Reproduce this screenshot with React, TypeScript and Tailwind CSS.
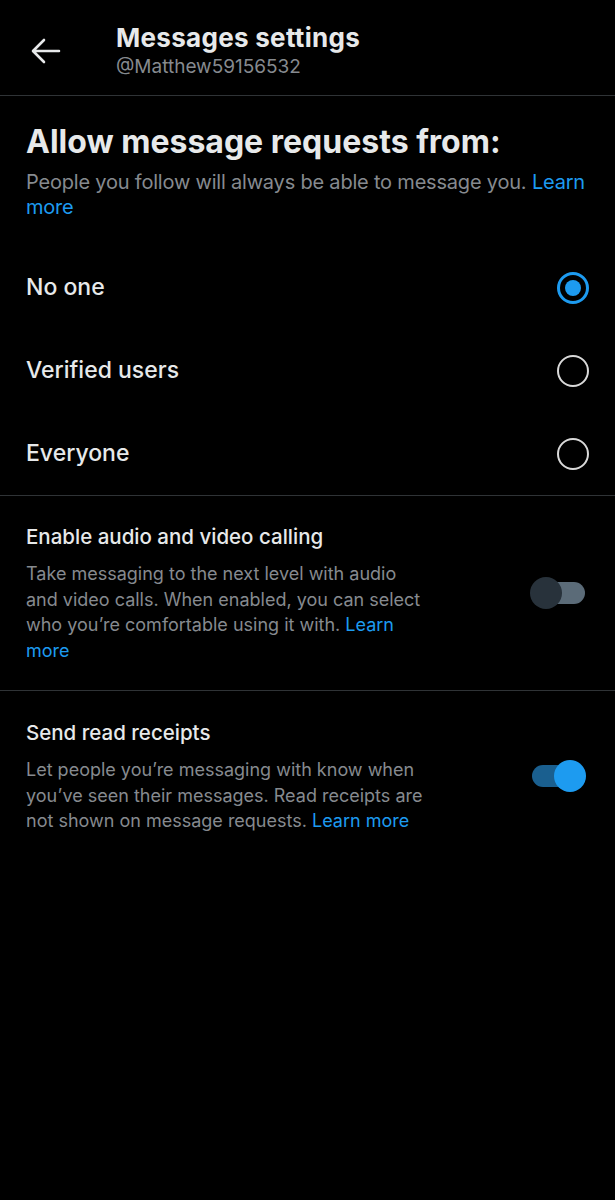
import { useState } from 'react'

const font = { fontFamily: 'Inter, "Noto Sans", sans-serif' }

function LearnMore({ text = 'Learn more' }: { text?: string }) {
  return <span className="text-[#1d9bf0]">{text}</span>
}

function Radio({ checked }: { checked: boolean }) {
  return checked ? (
    <span className="flex h-[32px] w-[32px] shrink-0 items-center justify-center rounded-full border-[3px] border-[#1d9bf0]">
      <span className="block h-[16px] w-[16px] rounded-full bg-[#1d9bf0]" />
    </span>
  ) : (
    <span className="block h-[32px] w-[32px] shrink-0 rounded-full border-2 border-[#d9d9d9]" />
  )
}

function Toggle({ on }: { on: boolean }) {
  return (
    <span className="relative block h-[32px] w-[56px] shrink-0">
      <span
        className={`absolute left-[2px] right-[1px] top-[5px] h-[22px] rounded-full ${
          on ? 'bg-[#1a5f8f]' : 'bg-[#5b6b78]'
        }`}
      />
      <span
        className={`absolute top-0 h-[32px] w-[32px] rounded-full ${
          on ? 'right-0 bg-[#1d9bf0]' : 'left-0 bg-[#28323b]'
        }`}
      />
    </span>
  )
}

export default function App() {
  const [choice, setChoice] = useState('No one')
  const options = ['No one', 'Verified users', 'Everyone']

  return (
    <div className="min-h-[1200px] w-[615px] bg-black text-[#e7e9ea]" style={font}>
      <header className="flex h-[96px] items-start border-b border-[#2f3336]">
        <div className="mt-[38px] flex w-[116px] items-center pl-[31px]">
          <svg width="30" height="26" viewBox="0 0 30 26" fill="none" stroke="#e7e9ea" strokeWidth="2.6" strokeLinecap="round" strokeLinejoin="round">
            <path d="M28 13H3M13 2L2 13l11 11" />
          </svg>
        </div>
        <div className="flex flex-col pt-[22px]">
          <h1 className="text-[26px] font-bold leading-[32px] tracking-[0.3px]">Messages settings</h1>
          <span className="text-[19px] leading-[26px] text-[#868a8f]">@Matthew59156532</span>
        </div>
      </header>

      <section className="px-[26px] pt-[26px]">
        <h2 className="text-[32px] font-bold leading-[40px]">Allow message requests from:</h2>
        <p className="mt-[8px] text-[20px] leading-[25px] tracking-[-0.2px] text-[#868a8f]">
          People you follow will always be able to message you. <LearnMore />
        </p>
      </section>

      <div className="mt-[26px] flex flex-col border-b border-[#2f3336]">
        {options.map((o) => (
          <button
            key={o}
            onClick={() => setChoice(o)}
            className="flex h-[83px] items-center justify-between px-[26px] text-left"
          >
            <span className="text-[23px] font-medium">{o}</span>
            <Radio checked={choice === o} />
          </button>
        ))}
      </div>

      <section className="flex items-center justify-between border-b border-[#2f3336] pb-[26px] pl-[26px] pr-[29px] pt-[26px]">
        <div className="w-[405px]">
          <h3 className="text-[20.5px] font-medium leading-[30px]">Enable audio and video calling</h3>
          <p className="mt-[9px] text-[18px] leading-[25.7px] text-[#868a8f]">
            Take messaging to the next level with audio and video calls. When enabled, you can select who you’re comfortable using it with. <LearnMore />
          </p>
        </div>
        <Toggle on={false} />
      </section>

      <section className="flex items-center justify-between pl-[26px] pr-[29px] pt-[27px]">
        <div className="w-[405px]">
          <h3 className="text-[20.5px] font-medium leading-[30px]">Send read receipts</h3>
          <p className="mt-[9px] text-[18px] leading-[25.7px] text-[#868a8f]">
            Let people you’re messaging with know when you’ve seen their messages. Read receipts are not shown on message requests. <LearnMore />
          </p>
        </div>
        <Toggle on={true} />
      </section>
    </div>
  )
}
